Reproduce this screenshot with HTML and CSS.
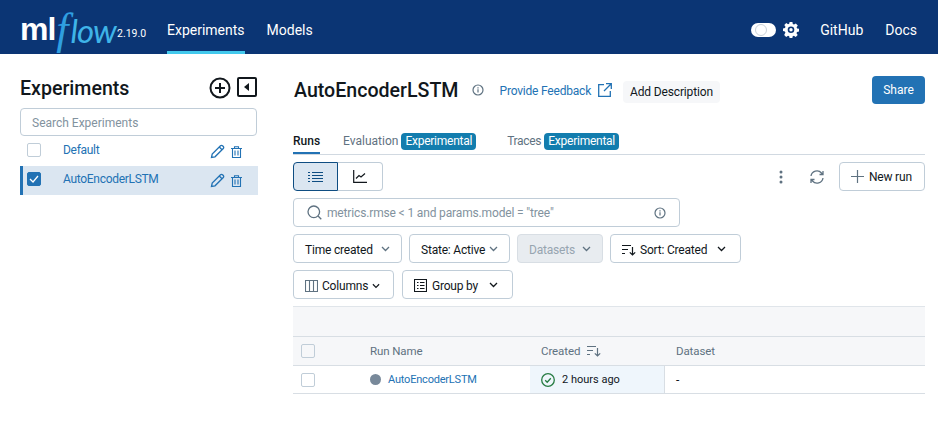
FILE: index.html
```html
<!DOCTYPE html>
<html lang="en">

<head>
  <meta charset="UTF-8">
  <title>MLflow</title>
  <link rel="stylesheet" href="styles.css">
</head>

<body>
  <header class="topbar">
    <div class="logo"><span class="logo-ml">ml</span><span class="logo-f">f</span><span class="logo-flow">low</span></div>
    <span class="version">2.19.0</span>
    <a class="nav-link nav-active">Experiments</a>
    <a class="nav-link">Models</a>
    <div class="topbar-right">
      <span class="toggle"><span class="toggle-knob"></span></span>
      <svg class="gear" width="16" height="16" viewBox="0 0 16 16">
        <path fill="#fff" fill-rule="evenodd" d="M6.600 0h2.800l.4 2.100 1.200.5L12.800 1.400l2 2-1.200 1.800.5 1.200 1.900.4v2.800l-2 .4-.5 1.200 1.200 1.800-2 2-1.800-1.200-1.200.5-.4 1.900H6.600l-.4-2-1.200-.5-1.800 1.200-2-2L2.400 10.600l-.5-1.200L0 9V6.400l2-.4.500-1.200L1.300 3l2-2L5 2.200l1.200-.5zM8 4.500a3.300 3.300 0 1 0 0 6.600 3.300 3.300 0 0 0 0-6.600zm0 1.600a1.700 1.700 0 1 1 0 3.400 1.700 1.700 0 0 1 0-3.400z" />
      </svg>
      <a class="nav-link github">GitHub</a>
      <a class="nav-link">Docs</a>
    </div>
  </header>

  <div class="page">
    <aside class="sidebar">
      <div class="sidebar-head">
        <h2>Experiments</h2>
        <svg width="22" height="22" viewBox="0 0 22 22" fill="none" stroke="#11171c" stroke-width="2">
          <circle cx="11" cy="11" r="9.500" />
          <path d="M11 6v10M6 11h10" />
        </svg>
        <svg class="collapse" width="20" height="20" viewBox="0 0 20 20">
          <rect x="1" y="1" width="18" height="18" rx="1" fill="none" stroke="#11171c" stroke-width="2" />
          <path d="M12 6v8l-5-4z" fill="#11171c" />
        </svg>
      </div>
      <div class="sidebar-search">Search Experiments</div>
      <div class="exp-row">
        <span class="check"></span>
        <a class="exp-name">Default</a>
        <svg class="pencil" width="15" height="15" viewBox="0 0 15 15" fill="none" stroke="#2272b4" stroke-width="1.300">
          <path d="M1.500 13.500l.7-3.500L10.500 1.700a1.400 1.400 0 0 1 2 0l.8.8a1.400 1.400 0 0 1 0 2L5 12.800zM9.300 3l2.700 2.700" />
        </svg>
        <svg class="trash" width="11" height="12" viewBox="0 0 11 12" fill="none" stroke="#2272b4" stroke-width="1.100">
          <path d="M0 2.500h11M3.500 2.500V.8h4v1.700M1.500 2.500v9h8v-9M4 4.500v5M7 4.500v5" />
        </svg>
      </div>
      <div class="exp-row exp-row-active">
        <span class="check check-on">
          <svg width="10" height="8" viewBox="0 0 10 8" fill="none" stroke="#fff" stroke-width="1.300">
            <path d="M1 4l3 3 5-6" />
          </svg>
        </span>
        <a class="exp-name">AutoEncoderLSTM</a>
        <svg class="pencil" width="15" height="15" viewBox="0 0 15 15" fill="none" stroke="#2272b4" stroke-width="1.300">
          <path d="M1.500 13.500l.7-3.500L10.500 1.700a1.400 1.400 0 0 1 2 0l.8.8a1.400 1.400 0 0 1 0 2L5 12.800zM9.300 3l2.700 2.700" />
        </svg>
        <svg class="trash" width="11" height="12" viewBox="0 0 11 12" fill="none" stroke="#2272b4" stroke-width="1.100">
          <path d="M0 2.500h11M3.500 2.500V.8h4v1.700M1.500 2.500v9h8v-9M4 4.500v5M7 4.500v5" />
        </svg>
      </div>
    </aside>

    <main class="content">
      <div class="title-row">
        <h1>AutoEncoderLSTM</h1>
        <svg class="info" width="12" height="12" viewBox="0 0 12 12" fill="none" stroke="#5f7281" stroke-width="1.200">
          <circle cx="6" cy="6" r="5" />
          <path d="M6 5.200v3.300M6 3.200v1.200" />
        </svg>
        <a class="feedback">Provide Feedback</a>
        <svg class="external" width="14" height="14" viewBox="0 0 14 14" fill="none" stroke="#2272b4" stroke-width="1.300">
          <path d="M6 1.700H.7v11.600h11.600V8M8 .7h5.300V6M13 1L6 8" />
        </svg>
        <span class="add-desc">Add Description</span>
        <span class="share">Share</span>
      </div>

      <div class="tabs">
        <span class="tab tab-active">Runs</span>
        <span class="tab tab-eval">Evaluation</span>
        <span class="tag">Experimental</span>
        <span class="tab tab-traces">Traces</span>
        <span class="tag">Experimental</span>
      </div>

      <div class="view-row">
        <div class="segment">
          <span class="segment-btn segment-on">
            <svg width="15" height="12" viewBox="0 0 15 12" stroke="#0e4d82" stroke-width="1.200">
              <path d="M4 1.500h11M4 4.500h11M4 7.500h11M4 10.500h11M0 1.500h2M0 4.500h2M0 7.500h2M0 10.500h2" />
            </svg>
          </span>
          <span class="segment-btn">
            <svg width="14" height="13" viewBox="0 0 14 13" fill="none" stroke="#11171c" stroke-width="1.200">
              <path d="M.7 0v12.300H14M3 8.500l3-3 2 1.500 4-3.500" />
            </svg>
          </span>
        </div>
        <svg class="kebab" width="4" height="14" viewBox="0 0 4 14" fill="#5f7281">
          <circle cx="2" cy="2" r="1.500" />
          <circle cx="2" cy="7" r="1.500" />
          <circle cx="2" cy="12" r="1.500" />
        </svg>
        <svg class="refresh" width="14" height="14" viewBox="0 0 14 14" fill="none" stroke="#5f7281" stroke-width="1.300">
          <path d="M1 6a6 6 0 0 1 10.500-3L13 4.500M13 1v3.500H9.500M13 8a6 6 0 0 1-10.500 3L1 9.500M1 13V9.500h3.500" />
        </svg>
        <span class="btn new-run">
          <svg width="13" height="13" viewBox="0 0 13 13" stroke="#5f7281" stroke-width="1.200">
            <path d="M6.500 0v13M0 6.500h13" />
          </svg>
          New run
        </span>
      </div>

      <div class="run-search">
        <svg width="15" height="15" viewBox="0 0 15 15" fill="none" stroke="#5f7281" stroke-width="1.300">
          <circle cx="6.800" cy="6.800" r="5.800" />
          <path d="M11 11l3.300 3.300" />
        </svg>
        <span class="run-search-text">metrics.rmse &lt; 1 and params.model = "tree"</span>
        <svg width="12" height="12" viewBox="0 0 12 12" fill="none" stroke="#5f7281" stroke-width="1.200">
          <circle cx="6" cy="6" r="5" />
          <path d="M6 5.200v3.300M6 3.200v1.200" />
        </svg>
      </div>

      <div class="filter-row">
        <span class="btn w-time">Time created
          <svg class="chev" width="9" height="6" viewBox="0 0 9 6" fill="none" stroke="#5f7281" stroke-width="1.300"><path d="M1 1l3.500 3.500L8 1" /></svg>
        </span>
        <span class="btn w-state">State: Active
          <svg class="chev" width="9" height="6" viewBox="0 0 9 6" fill="none" stroke="#5f7281" stroke-width="1.300"><path d="M1 1l3.500 3.500L8 1" /></svg>
        </span>
        <span class="btn btn-disabled w-datasets">Datasets
          <svg class="chev" width="9" height="6" viewBox="0 0 9 6" fill="none" stroke="#5f7281" stroke-width="1.300"><path d="M1 1l3.500 3.500L8 1" /></svg>
        </span>
        <span class="btn w-sort">
          <svg width="14" height="12" viewBox="0 0 14 12" fill="none" stroke="#11171c" stroke-width="1.200">
            <path d="M0 1.500h9M0 5.500h6M0 9.500h3M10.500 3v8M7.800 8.300l2.700 2.700 2.700-2.700" />
          </svg>
          Sort: Created
          <svg class="chev" width="9" height="6" viewBox="0 0 9 6" fill="none" stroke="#11171c" stroke-width="1.300"><path d="M1 1l3.500 3.500L8 1" /></svg>
        </span>
      </div>

      <div class="filter-row filter-row-wide">
        <span class="btn w-columns">
          <svg width="13" height="12" viewBox="0 0 13 12" fill="none" stroke="#5f7281" stroke-width="1.100">
            <path d="M.5.500h12v11H.5zM4.500.500v11M8.500.500v11" />
          </svg>
          Columns
          <svg width="8" height="6" viewBox="0 0 9 6" fill="none" stroke="#11171c" stroke-width="1.300"><path d="M1 1l3.500 3.500L8 1" /></svg>
        </span>
        <span class="btn w-group">
          <svg width="13" height="13" viewBox="0 0 13 13" fill="none" stroke="#11171c" stroke-width="1.100">
            <path d="M.5.500h12v12H.5zM3 3.500h1.500M6 3.500h4.500M3 6.500h1.500M6 6.500h4.500M3 9.500h1.500M6 9.500h4.500" />
          </svg>
          Group by
          <svg class="chev" width="9" height="6" viewBox="0 0 9 6" fill="none" stroke="#11171c" stroke-width="1.300"><path d="M1 1l3.500 3.500L8 1" /></svg>
        </span>
      </div>

      <div class="table-band"></div>
      <div class="table-head">
        <div class="cell cell-check"><span class="check check-head"></span></div>
        <div class="cell cell-name">Run Name</div>
        <div class="cell cell-created">Created
          <svg width="14" height="12" viewBox="0 0 14 12" fill="none" stroke="#5f7281" stroke-width="1.200">
            <path d="M0 1.500h9M0 5.500h6M0 9.500h3M10.500 3v8M7.800 8.300l2.700 2.700 2.700-2.700" />
          </svg>
        </div>
        <div class="cell cell-dataset">Dataset</div>
      </div>
      <div class="table-row">
        <div class="cell cell-check"><span class="check"></span></div>
        <div class="cell cell-name"><span class="dot"></span><a class="run-link">AutoEncoderLSTM</a></div>
        <div class="cell cell-created cell-sorted">
          <svg width="14" height="14" viewBox="0 0 14 14" fill="none" stroke="#277c43" stroke-width="1.300">
            <circle cx="7" cy="7" r="6.300" />
            <path d="M4.200 7.200l2 2 3.600-4" />
          </svg>
          <span class="ago">2 hours ago</span>
        </div>
        <div class="cell cell-dataset">-</div>
      </div>
    </main>
  </div>
</body>

</html>
```

FILE: styles.css
```css
* {
  box-sizing: border-box;
}

body {
  margin: 0;
  background: #fff;
  color: #11171c;
  font-family: Roboto, "Open Sans", sans-serif;
  font-size: 12px;
  overflow: hidden;
}

/* top bar */
.topbar {
  display: flex;
  align-items: center;
  height: 54px;
  padding: 0 21px 0 20px;
  background: #0b3574;
  color: #fff;
}

.logo {
  display: flex;
  align-items: center;
  width: 97px;
  height: 54px;
  padding-top: 5px;
}

.logo-ml {
  font-family: "Liberation Sans", sans-serif;
  font-size: 32px;
  letter-spacing: -1px;
  font-weight: 700;
  color: #fff;
}

.logo-f {
  margin-left: 1px;
  font-family: "Liberation Serif", serif;
  font-size: 44px;
  font-style: italic;
  color: #2f9fe0;
}

.logo-flow {
  margin-left: 2px;
  font-family: "Lato", sans-serif;
  font-size: 33px;
  font-style: italic;
  letter-spacing: -1px;
  color: #3fb4e8;
}

.version {
  width: 50px;
  padding-top: 12px;
  font-size: 10.500px;
}

.nav-link {
  display: flex;
  align-items: center;
  height: 54px;
  margin-right: 22px;
  padding-top: 6px;
  font-size: 14px;
  color: #fff;
}

.nav-active {
  border-bottom: 3px solid #43c9ed;
  border-top: 3px solid transparent;
}

.topbar-right {
  display: flex;
  align-items: center;
  margin-left: auto;
}

.topbar-right .nav-link:last-child {
  margin-right: 0;
}

.toggle {
  display: flex;
  width: 25px;
  height: 14px;
  margin: 5px 7px 0 0;
  padding: 1px;
  border-radius: 7px;
  background: #fff;
}

.toggle-knob {
  width: 12px;
  height: 12px;
  border: 1px solid #c9d1d8;
  border-radius: 50%;
  background: #fff;
  margin-left: 3px;
}

.gear {
  margin: 5px 21px 0 0;
}

.github {
  margin-right: 22px;
}

/* layout */
.page {
  display: flex;
  padding: 22px 13px 0 20px;
}

.sidebar {
  width: 238px;
  margin-right: 35px;
  flex-shrink: 0;
}

.sidebar-head {
  display: flex;
  align-items: flex-start;
  height: 32px;
  padding: 1px 1px 0 0;
}

.sidebar-head h2 {
  flex: 1;
  margin: 0;
  font-size: 19.600px;
  line-height: 24px;
  font-weight: 500;
}

.collapse {
  margin-left: 6px;
}

.sidebar-search {
  display: flex;
  align-items: center;
  width: 237px;
  height: 28px;
  margin-bottom: 1px;
  padding: 1px 0 0 11px;
  border: 1px solid #c0cdd8;
  border-radius: 4px;
  color: #82929e;
}

.exp-row {
  display: flex;
  align-items: center;
  height: 29px;
  padding: 0 16px 3px 7px;
}

.exp-row-active {
  padding-left: 4px;
  border-left: 3px solid #2272b4;
  background: #dbe6f1;
}

.check {
  flex-shrink: 0;
  display: flex;
  align-items: center;
  justify-content: center;
  width: 14px;
  height: 14px;
  border: 1px solid #c0cdd8;
  border-radius: 2px;
  background: #fff;
}

.check-on {
  border-color: #2272b4;
  background: #2272b4;
}

.check-head {
  background: #f6f7f9;
}

.exp-name {
  flex: 1;
  margin-left: 22px;
  color: #2272b4;
  letter-spacing: -.3px;
}

.pencil {
  margin: 3px 6px 0 0;
}

.trash {
  margin-top: 3px;
}

/* title */
.content {
  flex: 1;
  min-width: 0;
}

.title-row {
  display: flex;
  align-items: center;
  height: 28px;
}

.title-row h1 {
  margin: 0 0 0 1px;
  font-size: 19.600px;
  font-weight: 500;
}

.info {
  margin-left: 13px;
}

.feedback {
  margin: 2px 0 0 16px;
  color: #2272b4;
  letter-spacing: -.2px;
}

.external {
  margin-left: 7px;
}

.add-desc {
  display: flex;
  align-items: center;
  height: 22px;
  margin: 3px 0 0 11px;
  padding: 0 7px;
  border-radius: 4px;
  background: #f6f7f9;
  letter-spacing: -.15px;
}

.share {
  display: flex;
  align-items: center;
  justify-content: center;
  width: 53px;
  height: 28px;
  margin-left: auto;
  border-radius: 4px;
  background: #2272b4;
  color: #fff;
}

/* tabs */
.tabs {
  display: flex;
  align-items: center;
  height: 27px;
  margin-top: 24px;
  border-bottom: 1px solid #d1d9e1;
}

.tab {
  display: flex;
  align-items: center;
  height: 26px;
  color: #5f7281;
}

.tab-active {
  margin-right: 23px;
  border-bottom: 2px solid #2272b4;
  border-top: 2px solid transparent;
  color: #11171c;
  font-weight: 500;
}

.tab-eval {
  margin-right: 3px;
}

.tab-traces {
  margin: 0 3px 0 31px;
  letter-spacing: -.3px;
}

.tag {
  display: flex;
  align-items: center;
  height: 17px;
  padding: 0 4px;
  border-radius: 4px;
  background: #137dae;
  color: #fff;
  letter-spacing: -.25px;
}

/* controls */
.view-row {
  display: flex;
  align-items: center;
  margin-top: 7px;
}

.segment {
  display: flex;
  margin-right: auto;
}

.segment-btn {
  display: flex;
  align-items: center;
  justify-content: center;
  width: 45px;
  height: 29px;
  border: 1px solid #c0cdd8;
  border-left: 0;
  border-radius: 0 4px 4px 0;
}

.segment-on {
  border: 1px solid #0e4d82;
  border-radius: 4px 0 0 4px;
  background: #dbe6f1;
}

.kebab {
  margin-right: 27px;
}

.refresh {
  margin-right: 15px;
}

.btn {
  display: flex;
  align-items: center;
  height: 29px;
  padding: 0 11px;
  border: 1px solid #c0cdd8;
  border-radius: 4px;
  white-space: nowrap;
  background: #fff;
  letter-spacing: -.2px;
}

.new-run {
  width: 86px;
  gap: 5px;
}

.run-search {
  display: flex;
  align-items: center;
  width: 387px;
  height: 29px;
  margin-top: 7px;
  padding: 0 13px;
  border: 1px solid #c0cdd8;
  border-radius: 4px;
}

.run-search-text {
  flex: 1;
  margin-left: 5px;
  color: #82929e;
  letter-spacing: -.15px;
}

.filter-row {
  display: flex;
  gap: 7px;
  margin-top: 7px;
}

.filter-row-wide {
  gap: 8px;
}

.filter-row .btn {
  padding-top: 2px;
}

.chev {
  margin: 0 0 2px auto;
}

.btn-disabled {
  background: #e8ecf0;
  border-color: #d8dee4;
  color: #97a5b0;
}

.w-time {
  width: 109px;
}

.w-state {
  width: 101px;
}

.w-datasets {
  width: 86px;
}

.w-sort {
  width: 131px;
  gap: 4px;
  padding-right: 14px;
}

.w-columns {
  width: 101px;
  gap: 4px;
}

.w-group {
  width: 111px;
  gap: 5px;
  padding-right: 14px;
}

/* table */
.table-band {
  height: 31px;
  margin-top: 7px;
  border-top: 1px solid #e0e5ea;
  border-bottom: 1px solid #d8dee4;
  background: #f6f7f9;
}

.table-head,
.table-row {
  display: flex;
  height: 29px;
  border-bottom: 1px solid #d8dee4;
}

.table-row {
  height: 28px;
}

.table-head {
  background: #f6f7f9;
  color: #5f7281;
  font-size: 11.500px;
  letter-spacing: -.1px;
}

.cell {
  display: flex;
  align-items: center;
}

.cell-check {
  width: 77px;
  padding-left: 8px;
}

.cell-name {
  width: 160px;
}

.cell-created {
  width: 135px;
  padding-left: 11px;
  gap: 7px;
}

.cell-dataset {
  padding-left: 11px;
}

.cell-sorted {
  background: #eff6fc;
  border-right: 1px solid #d8dee4;
}

.dot {
  width: 11px;
  height: 11px;
  margin-right: 7px;
  border-radius: 50%;
  background: #78899a;
}

.run-link {
  color: #2272b4;
  font-size: 11px;
  letter-spacing: -.2px;
}

.ago {
  font-size: 11px;
}
```
